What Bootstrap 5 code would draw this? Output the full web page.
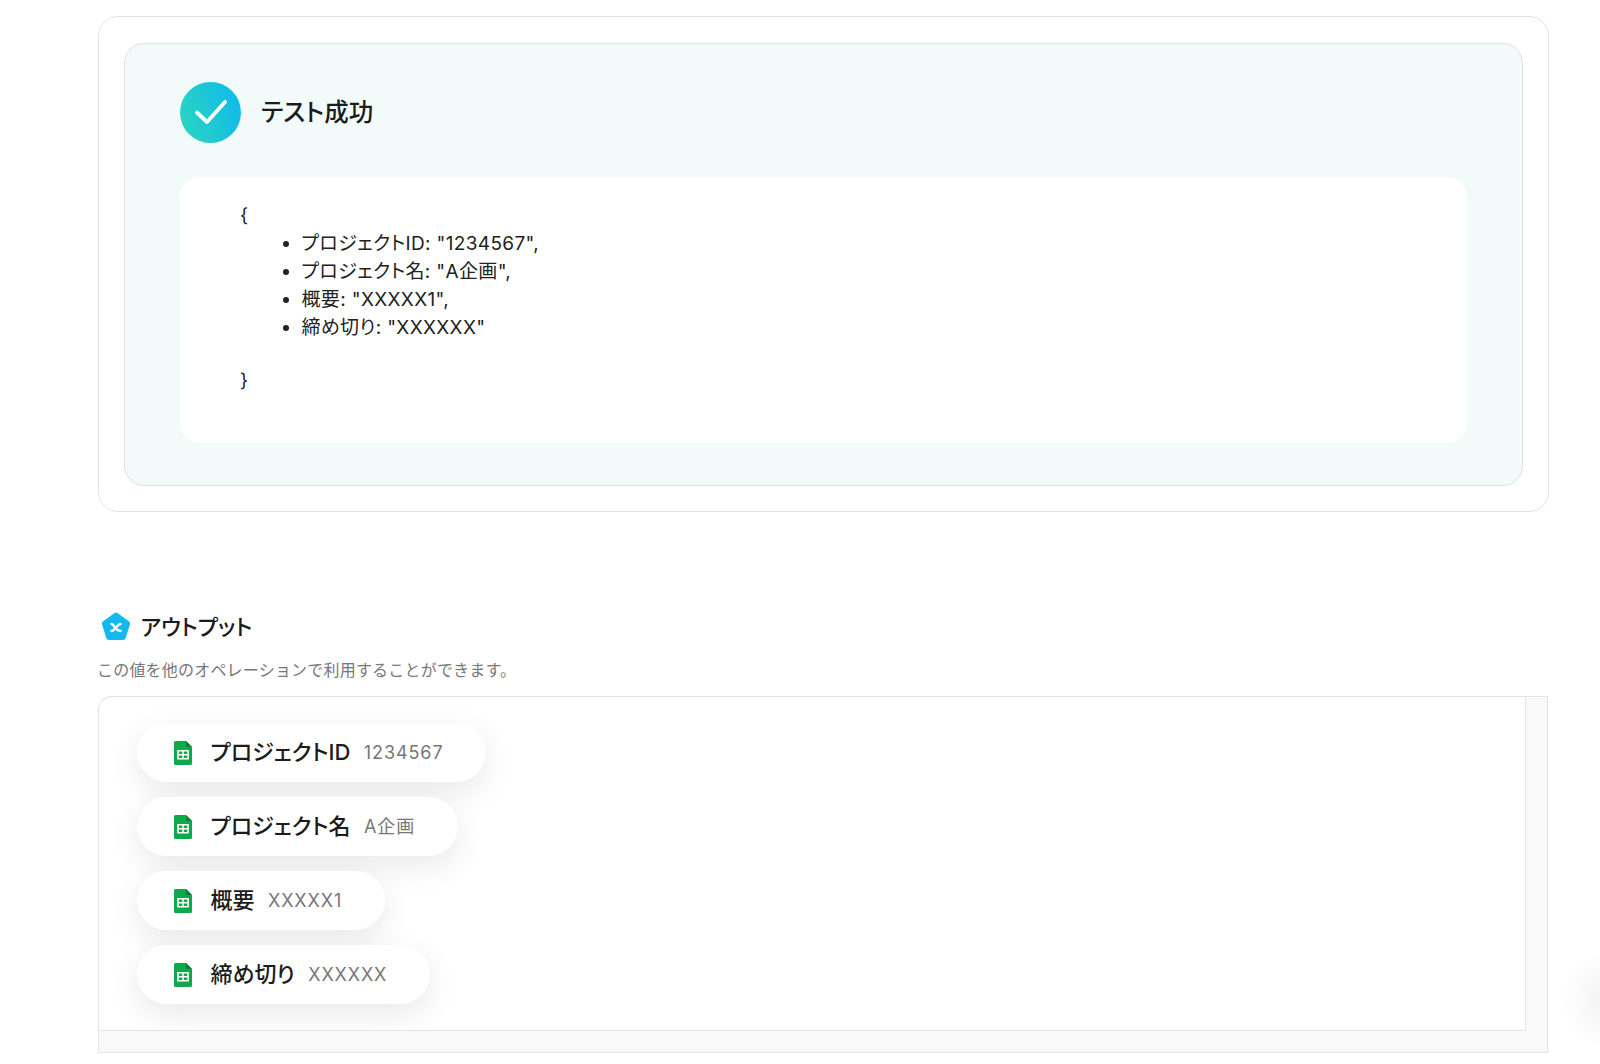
<!DOCTYPE html>
<html lang="ja">
<head>
<meta charset="utf-8">
<title>テスト成功</title>
<link href="https://cdn.jsdelivr.net/npm/bootstrap@5.3.0/dist/css/bootstrap.min.css" rel="stylesheet">
<style>
html,body{height:1064px;overflow:hidden;background:#fff}
body{font-family:Inter,"Noto Sans CJK JP",sans-serif;color:#1c1c1c;position:relative}
.page-wrap{width:1451px;margin-left:98px;padding-top:16px}
.outer-frame{height:495.500px;border:1.5px solid #dfe2e7;border-radius:20px;padding:26px 25px}
.result-panel{height:443px;background:#f3fafa;border:1.5px solid #dfe2e7;border-radius:20px;padding:37.500px 55px 0}
.ok-circle{width:61px;height:61px;flex:none;border-radius:50%;background:linear-gradient(70deg,#2bd8bd,#0fb7ee)}
.ok-title{font-size:24.500px;font-weight:500;line-height:1;font-feature-settings:"palt"}
.json-box{height:266px;margin-top:34px;background:#fff;border-radius:20px;padding:25px 60px;font-size:19px;line-height:28px;color:#222;letter-spacing:.35px;font-feature-settings:"palt"}
.json-box ul{margin:0 0 25px;padding-left:61.500px}
.output-head{margin-top:99px;height:32px;padding-left:3px}
.output-title{font-size:22px;font-weight:500;line-height:1;margin-left:9.500px;font-feature-settings:"palt"}
.output-sub{font-size:16px;line-height:24px;color:#777;margin-top:15px;margin-left:-1px;letter-spacing:.2px}
.output-frame{margin-top:14px;margin-right:1px;height:357px;display:grid;grid-template-columns:1fr 22px;grid-template-rows:1fr 22px;border-top:1.5px solid #e4e4e4;border-left:1.5px solid #e4e4e4;border-radius:14px 0 0 0}
.pill-area{border-right:1.5px solid #e4e4e4;border-bottom:1.5px solid #e4e4e4;padding:26.500px 38px 0;display:flex;flex-direction:column;align-items:flex-start;gap:15px;overflow:hidden}
.field-pill{height:59px;padding:0 43px 0 37px;background:#fff;border-radius:30px;box-shadow:0 10px 32px rgba(0,0,0,.09);display:flex;align-items:center}
.field-pill svg{flex:none;margin-right:18.500px}
.field-name{font-size:22px;font-weight:500;color:#1c1c1c;white-space:nowrap;font-feature-settings:"palt"}
.field-val{font-size:18px;color:#777;margin-left:13.500px;letter-spacing:.9px;white-space:nowrap}
.bar-r{background:#f9f9f9;border-right:1.5px solid #e4e4e4}
.bar-b{background:#f9f9f9;border-bottom:1.5px solid #e4e4e4}
.bar-c{background:#f9f9f9;border-right:1.5px solid #e4e4e4;border-bottom:1.5px solid #e4e4e4}
.float-glow{position:absolute;left:1560px;top:950px;width:100px;height:100px;border-radius:50%;background:radial-gradient(circle,rgba(0,0,0,.05),rgba(0,0,0,0) 70%)}
</style>
</head>
<body>
<svg width="0" height="0" class="d-block position-absolute"><defs>
<symbol id="sheet" viewBox="0 0 18 24"><path d="M1.600 0H12l6 6v16.400a1.600 1.600 0 0 1-1.600 1.600H1.600A1.600 1.600 0 0 1 0 22.400V1.600A1.600 1.600 0 0 1 1.600 0z" fill="#0fa84a"/><path d="M12 0l6 6h-4.500A1.500 1.500 0 0 1 12 4.500z" fill="#0a7d38"/><path d="M3.200 9h11.600v9.500H3.200zM4.800 10.500v2.500h3.500v-2.500zm5 0v2.500h3.500v-2.500zM4.800 14.500V17h3.500v-2.500zm5 0V17h3.500v-2.500z" fill="#fff" fill-rule="evenodd"/></symbol>
</defs></svg>
<main class="page-wrap">
  <section class="outer-frame">
    <div class="result-panel">
      <div class="d-flex align-items-center gap-3">
        <div class="ok-circle d-flex align-items-center justify-content-center">
          <svg width="34" height="26" viewBox="0 0 34 26" fill="none"><path d="M3 13.500l10 9.500L31 3" stroke="#fff" stroke-width="3.800" stroke-linecap="round" stroke-linejoin="round"/></svg>
        </div>
        <div class="ok-title ms-1">テスト成功</div>
      </div>
      <div class="json-box">
        <div>{</div>
        <ul>
          <li>プロジェクトID: "1234567",</li>
          <li>プロジェクト名: "A企画",</li>
          <li>概要: "XXXXX1",</li>
          <li>締め切り: "XXXXXX"</li>
        </ul>
        <div>}</div>
      </div>
    </div>
  </section>

  <div class="output-head d-flex align-items-center">
    <svg width="30" height="30" viewBox="0 0 30 30"><path d="M13.200 1.200a3 3 0 0 1 3.600 0l11 8a3 3 0 0 1 1.100 3.400l-4.200 13.300a3 3 0 0 1-2.900 2.100H8.200a3 3 0 0 1-2.900-2.100L1.100 12.600a3 3 0 0 1 1.100-3.400z" fill="#12b8ee"/><path d="M10.500 12c2.800 0 3.500 7 9 7M19.500 12c-3.500 0-5.500 7-9 7" stroke="#fff" stroke-width="2.400" fill="none" stroke-linecap="round"/></svg>
    <div class="output-title">アウトプット</div>
  </div>
  <p class="output-sub mb-0">この値を他のオペレーションで利用することができます。</p>

  <section class="output-frame">
    <div class="pill-area">
      <div class="field-pill"><svg width="18" height="24"><use href="#sheet"/></svg><span class="field-name">プロジェクトID</span><span class="field-val">1234567</span></div>
      <div class="field-pill"><svg width="18" height="24"><use href="#sheet"/></svg><span class="field-name">プロジェクト名</span><span class="field-val">A企画</span></div>
      <div class="field-pill"><svg width="18" height="24"><use href="#sheet"/></svg><span class="field-name">概要</span><span class="field-val">XXXXX1</span></div>
      <div class="field-pill"><svg width="18" height="24"><use href="#sheet"/></svg><span class="field-name">締め切り</span><span class="field-val">XXXXXX</span></div>
    </div>
    <div class="bar-r"></div>
    <div class="bar-b"></div>
    <div class="bar-c"></div>
  </section>
</main>
<div class="float-glow"></div>
<script src="https://cdn.jsdelivr.net/npm/bootstrap@5.3.0/dist/js/bootstrap.bundle.min.js"></script>
</body>
</html>
